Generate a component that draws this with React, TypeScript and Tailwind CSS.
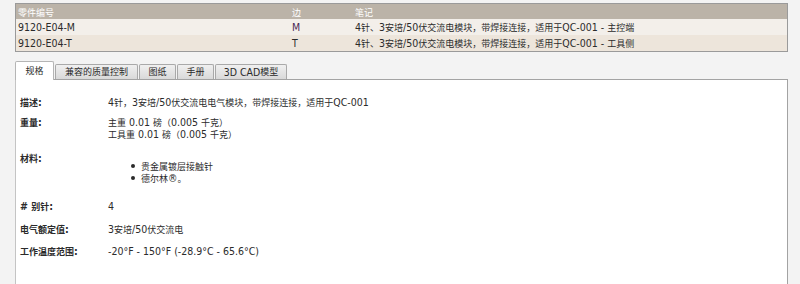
import React from "react";

const CJK = /([\u2E80-\u9FFF\u3000-\u303F\uFF00-\uFFEF]+)/;

function T({ s }: { s: string }) {
  const parts = s.split(CJK);
  return (
    <>
      {parts.map((p, i) =>
        i % 2 === 1 ? (
          <span key={i} className="text-[9px] leading-none">
            {p}
          </span>
        ) : (
          <React.Fragment key={i}>{p}</React.Fragment>
        )
      )}
    </>
  );
}

const font = {
  fontFamily:
    '"DejaVu Sans Condensed", "Liberation Sans", "Noto Sans CJK SC", sans-serif',
};

const rows = [
  {
    part: "9120-E04-M",
    side: "M",
    note: "4针、3安培/50伏交流电模块，带焊接连接，适用于QC-001 - 主控端",
    bg: "bg-[#f3efea]",
    sideColor: "text-[#4b2a55]",
  },
  {
    part: "9120-E04-T",
    side: "T",
    note: "4针、3安培/50伏交流电模块，带焊接连接，适用于QC-001 - 工具侧",
    bg: "bg-[#ede5db]",
    sideColor: "text-[#2b2b2b]",
  },
];

const tabs = [
  { label: "兼容的质量控制", w: "w-[83px]" },
  { label: "图纸", w: "w-[37px]" },
  { label: "手册", w: "w-[37px]" },
  { label: "3D CAD模型", w: "w-[72px]" },
];

function Label({ s }: { s: string }) {
  return (
    <div className="w-[88px] shrink-0 font-bold">
      <T s={s} />
    </div>
  );
}

export default function App() {
  return (
    <div
      className="w-[800px] h-[284px] overflow-hidden bg-[#f3f3f3] text-[10.5px] leading-[12px] text-[#2b2b2b]"
      style={font}
    >
      <div className="pt-[3px] pl-[15px] pr-[12px]">
        <div className="border border-[#9a9a9a]">
          <div className="flex h-[15px] items-center bg-[#bbb3a8] text-white">
            <div className="w-[274px] pl-[2px]">
              <T s="零件编号" />
            </div>
            <div className="w-[63px] pl-[2px]">
              <T s="边" />
            </div>
            <div className="pl-[2px]">
              <T s="笔记" />
            </div>
          </div>
          {rows.map((r) => (
            <div key={r.part} className={`flex h-[16px] items-center ${r.bg}`}>
              <div className="w-[274px] pl-[2px]">{r.part}</div>
              <div className={`w-[63px] pl-[2px] ${r.sideColor}`}>{r.side}</div>
              <div className="pl-[2px]">
                <T s={r.note} />
              </div>
            </div>
          ))}
        </div>

        <div className="mt-[9px] flex items-end gap-[1px]">
          <div className="relative z-10 -mb-px flex h-[19px] w-[39px] items-center justify-center rounded-t-[2px] border border-b-0 border-[#b5b5b5] bg-white">
            <T s="规格" />
          </div>
          {tabs.map((t) => (
            <div
              key={t.label}
              className={`flex h-[15px] ${t.w} items-center justify-center rounded-t-[2px] border border-b-0 border-[#a9a9a9] bg-gradient-to-b from-[#f0f0f0] to-[#d9d9d9]`}
            >
              <T s={t.label} />
            </div>
          ))}
        </div>

        <div className="h-[220px] border border-[#a3a3a3] border-l-[#c4c4c4] bg-white pl-[4px] pt-[16px]">
          <div className="flex">
            <Label s="描述:" />
            <div>
              <T s="4针，3安培/50伏交流电电气模块，带焊接连接，适用于QC-001" />
            </div>
          </div>

          <div className="mt-[8px] flex">
            <Label s="重量:" />
            <div>
              <div>
                <T s="主重 0.01 磅（0.005 千克）" />
              </div>
              <div>
                <T s="工具重 0.01 磅（0.005 千克）" />
              </div>
            </div>
          </div>

          <div className="mt-[12px] flex">
            <Label s="材料:" />
            <div className="pt-[8px] pl-[23px]">
              {["贵金属镀层接触针", "德尔林®。"].map((b) => (
                <div key={b} className="flex items-center">
                  <span className="mr-[6px] h-[4px] w-[4px] rounded-full bg-[#2b2b2b]" />
                  <span>
                    <T s={b} />
                  </span>
                </div>
              ))}
            </div>
          </div>

          <div className="mt-[16px] flex">
            <Label s="# 别针:" />
            <div>4</div>
          </div>

          <div className="mt-[11px] flex">
            <Label s="电气额定值:" />
            <div>
              <T s="3安培/50伏交流电" />
            </div>
          </div>

          <div className="mt-[10px] flex">
            <Label s="工作温度范围:" />
            <div>-20°F - 150°F (-28.9°C - 65.6°C)</div>
          </div>
        </div>
      </div>
    </div>
  );
}
